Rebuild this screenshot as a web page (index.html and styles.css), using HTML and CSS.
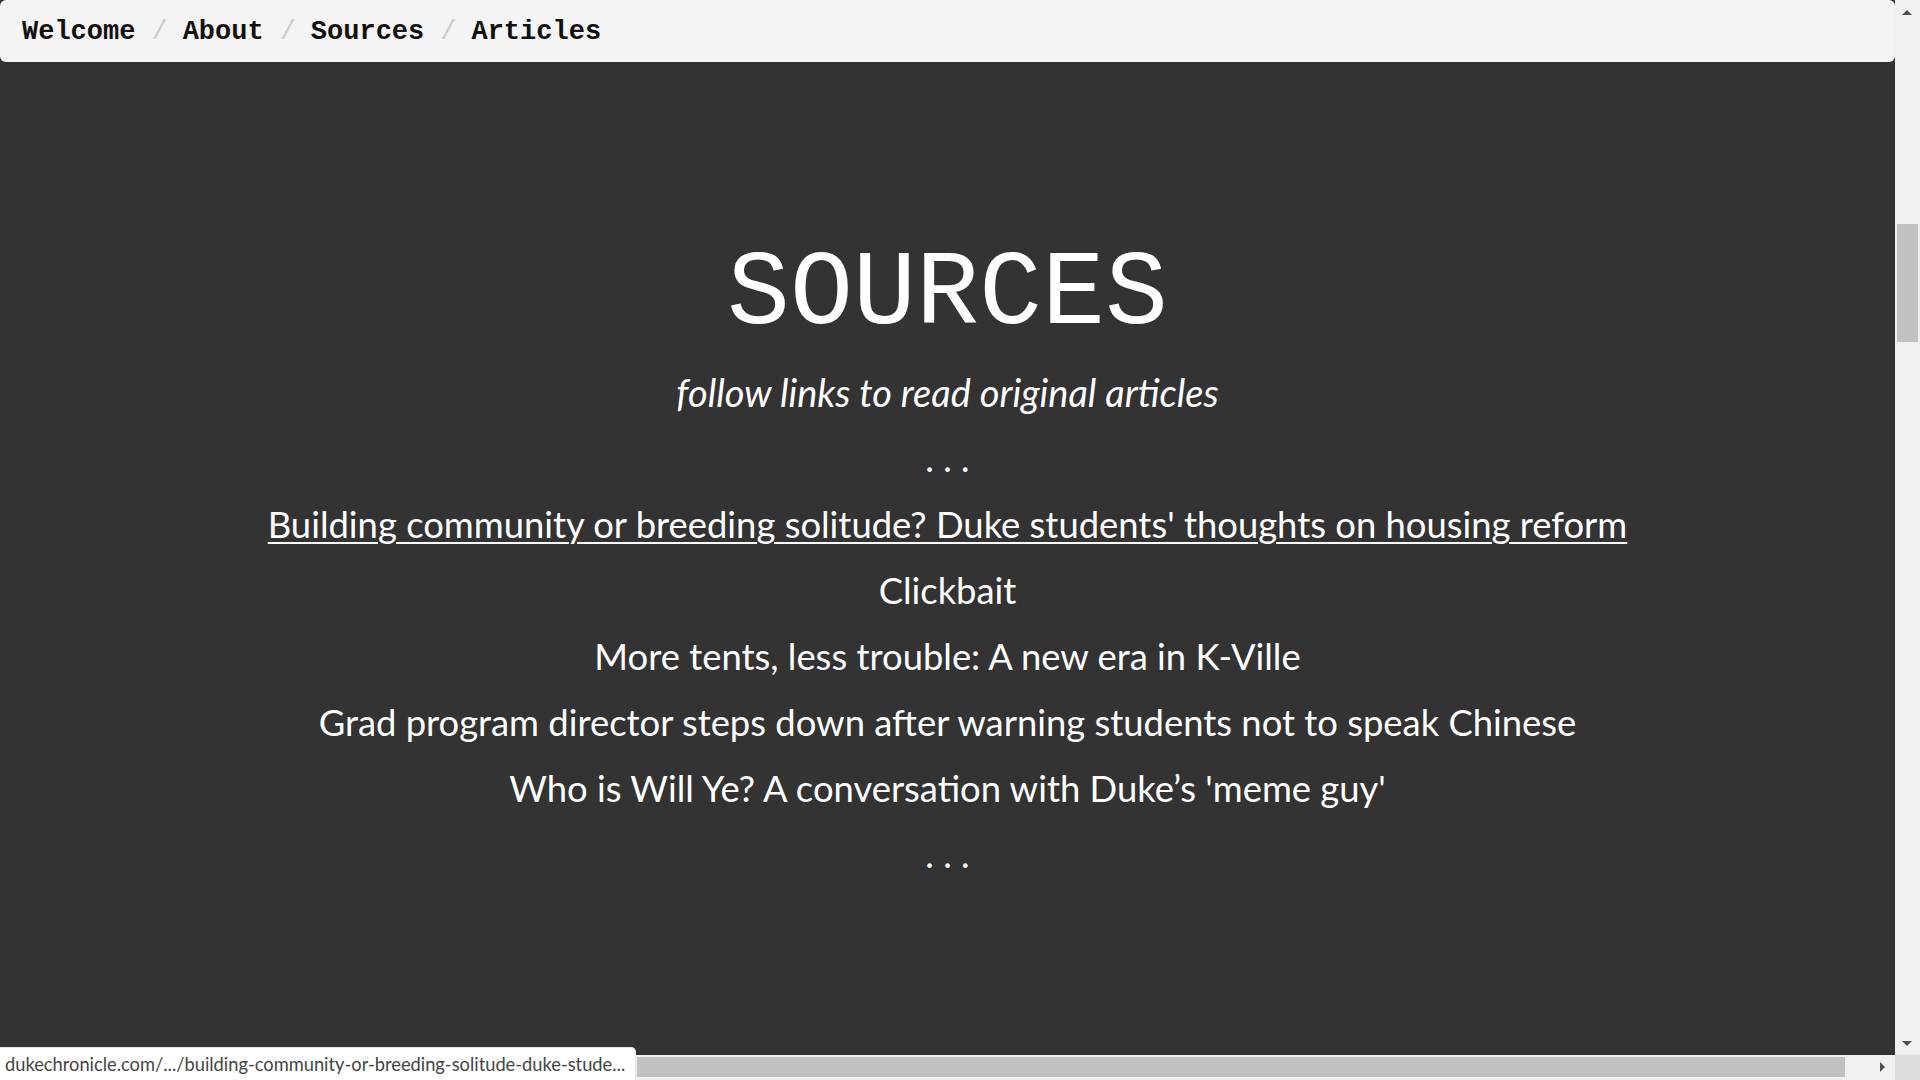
FILE: index.html
```html
<!DOCTYPE html>
<html lang="en">
<head>
<meta charset="utf-8">
<title>Sources</title>
<link rel="stylesheet" href="styles.css">
</head>
<body>
<div class="page">
  <nav class="crumbs">
    <ol class="breadcrumb">
      <li><a href="#">Welcome</a></li>
      <li><a href="#">About</a></li>
      <li><a href="#">Sources</a></li>
      <li><a href="#">Articles</a></li>
    </ol>
  </nav>
  <main class="content">
    <h1 class="title">SOURCES</h1>
    <p class="subtitle">follow links to read original articles</p>
    <p class="dots">. . .</p>
    <ul class="sources">
      <li><a class="src-link hover" href="#">Building community or breeding solitude? Duke students' thoughts on housing reform</a></li>
      <li><a class="src-link" href="#">Clickbait</a></li>
      <li><a class="src-link" href="#">More tents, less trouble: A new era in K-Ville</a></li>
      <li><a class="src-link" href="#">Grad program director steps down after warning students not to speak Chinese</a></li>
      <li><a class="src-link" href="#">Who is Will Ye? A conversation with Duke’s 'meme guy'</a></li>
    </ul>
    <p class="dots">. . .</p>
  </main>
</div>

<div class="vscroll">
  <div class="arrow-up"></div>
  <div class="vthumb"></div>
  <div class="arrow-down"></div>
</div>
<div class="hscroll">
  <div class="hthumb"></div>
  <div class="arrow-right"></div>
</div>
<div class="corner"></div>
<div class="status">dukechronicle.com/.../building-community-or-breeding-solitude-duke-stude...</div>
</body>
</html>
```
FILE: styles.css
```css
html, body {
  margin: 0;
  padding: 0;
  height: 100%;
  overflow: hidden;
  background: #333333;
}

.page {
  width: calc(100% - 25px);
  height: calc(100% - 25px);
  background: #333333;
  overflow: hidden;
}

.crumbs {
  background: #f4f4f4;
  border-radius: 6px;
}

.breadcrumb {
  list-style: none;
  margin: 0;
  padding: 13px 22px 11px;
  display: flex;
  font-family: "Courier New", "Liberation Mono", monospace;
  font-weight: bold;
  font-size: 27px;
  line-height: 38px;
}

.breadcrumb li + li::before {
  content: "/";
  padding: 0 15px 0 16px;
  color: #cccccc;
  font-weight: normal;
}

.breadcrumb a {
  color: #111111;
  text-decoration: none;
}

.content {
  padding-top: 174px;
  text-align: center;
  color: #ffffff;
  font-family: Lato, "Open Sans", sans-serif;
}

.title {
  margin: 0 0 3px;
  font-family: "Courier New", "Liberation Mono", monospace;
  font-weight: normal;
  font-size: 105px;
  line-height: 120px;
}

.subtitle {
  margin: 0;
  font-style: italic;
  font-size: 38px;
  line-height: 66px;
}

.dots {
  margin: 0;
  font-size: 36.4px;
  line-height: 66px;
}

.sources {
  list-style: none;
  margin: 0;
  padding: 0;
  font-size: 36.4px;
  line-height: 66px;
}

.src-link {
  color: #ffffff;
  text-decoration: none;
}

.src-link.hover {
  text-decoration: underline;
  text-underline-offset: 4px;
  text-decoration-thickness: 2px;
}

.vscroll {
  position: fixed;
  top: 0;
  right: 0;
  width: 25px;
  height: calc(100% - 25px);
  background: #f0f0f0;
}

.vthumb {
  position: absolute;
  left: 2px;
  right: 2px;
  top: 224px;
  height: 118px;
  background: #c1c1c1;
}

.arrow-up, .arrow-down {
  position: absolute;
  left: 7px;
  width: 0;
  height: 0;
  border-left: 5px solid transparent;
  border-right: 5px solid transparent;
}

.arrow-up {
  top: 10px;
  border-bottom: 5px solid #505050;
}

.arrow-down {
  bottom: 9px;
  border-top: 5px solid #505050;
}

.hscroll {
  position: fixed;
  left: 0;
  bottom: 0;
  width: calc(100% - 25px);
  height: 25px;
  background: #f0f0f0;
}

.hthumb {
  position: absolute;
  left: 637px;
  width: 1208px;
  top: 2px;
  bottom: 3px;
  background: #c1c1c1;
}

.arrow-right {
  position: absolute;
  right: 10px;
  top: 7px;
  width: 0;
  height: 0;
  border-top: 5px solid transparent;
  border-bottom: 5px solid transparent;
  border-left: 5px solid #505050;
}

.corner {
  position: fixed;
  right: 0;
  bottom: 0;
  width: 25px;
  height: 25px;
  background: #dcdcdc;
}

.status {
  position: fixed;
  left: 0;
  bottom: 0;
  width: 630px;
  height: 32px;
  padding-left: 5px;
  box-sizing: content-box;
  background: #ffffff;
  border-top: 1px solid #e2e2e2;
  border-right: 1px solid #e2e2e2;
  border-top-right-radius: 5px;
  color: #444444;
  font-family: Lato, "Open Sans", sans-serif;
  font-size: 18.3px;
  line-height: 32px;
  white-space: nowrap;
  overflow: hidden;
}
```
